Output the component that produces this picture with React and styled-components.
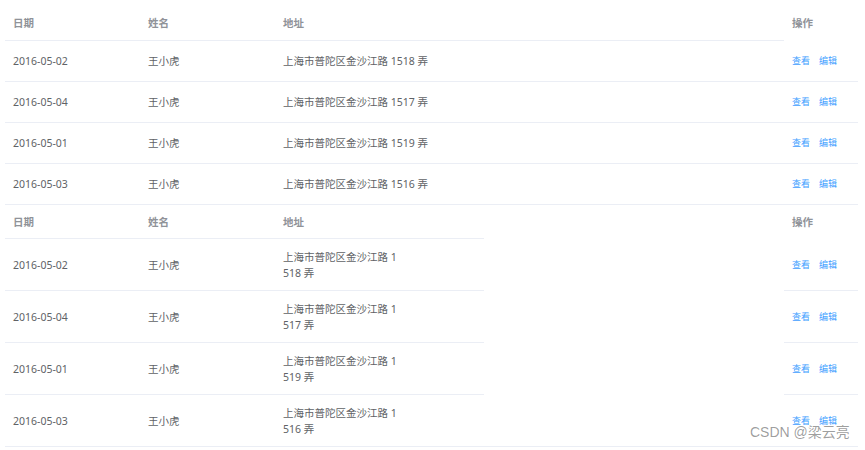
import React from "react";
import styled, { createGlobalStyle } from "styled-components";

const GlobalStyle = createGlobalStyle`
  html, body {
    margin: 0;
    padding: 0;
    background: #fff;
  }
  body {
    font-family: "Noto Sans", "Noto Sans CJK SC", sans-serif;
  }
`;

const Page = styled.div`
  position: relative;
  width: 865px;
  height: 450px;
  padding: 5px 7px 0 5px;
  box-sizing: border-box;
  overflow: hidden;
`;

const TableWrap = styled.div`
  display: flex;
  border-bottom: 1px solid #ebeef5;
  font-size: 10.5px;
  color: #606266;
`;

const Main = styled.div`
  flex: 1;
  min-width: 0;
`;

// content-box height; the border sits below it, the last row has none
const Row = styled.div`
  display: grid;
  grid-template-columns: ${(p) => p.$cols};
  width: ${(p) => p.$width};
  height: ${(p) => p.$height}px;
  border-bottom: 1px solid #ebeef5;

  &:last-child {
    border-bottom: none;
  }
`;

const Cell = styled.div`
  display: flex;
  align-items: center;
  padding: 0 ${(p) => (p.$narrow ? 11 : 8)}px 0 8px;
  line-height: 16px;
  word-break: break-all;
  color: ${(p) => (p.$head ? "#909399" : "#606266")};
  font-weight: ${(p) => (p.$head ? "bold" : "normal")};
`;

const Fixed = styled.div`
  width: 74px;
  flex: none;
  background: #fff;
`;

const FixedRow = styled.div`
  display: flex;
  align-items: center;
  gap: 9px;
  padding-left: 8px;
  height: ${(p) => p.$height}px;
  border-bottom: 1px solid ${(p) => (p.$head ? "transparent" : "#ebeef5")};
  color: #909399;
  font-weight: bold;

  &:last-child {
    border-bottom: none;
  }
`;

const LinkButton = styled.button`
  background: none;
  border: none;
  padding: 0;
  font-family: inherit;
  font-size: 9px;
  line-height: 12px;
  color: #409eff;
  cursor: pointer;
`;

const Watermark = styled.div`
  position: absolute;
  left: 750px;
  top: 424px;
  font-family: "Liberation Sans", "Noto Sans CJK SC", sans-serif;
  font-size: 14px;
  line-height: 16px;
  color: rgba(0, 0, 0, 0.4);
  white-space: nowrap;
  pointer-events: none;
`;

const data = [
  { date: "2016-05-02", name: "王小虎", address: "上海市普陀区金沙江路 1518 弄" },
  { date: "2016-05-04", name: "王小虎", address: "上海市普陀区金沙江路 1517 弄" },
  { date: "2016-05-01", name: "王小虎", address: "上海市普陀区金沙江路 1519 弄" },
  { date: "2016-05-03", name: "王小虎", address: "上海市普陀区金沙江路 1516 弄" },
];

const DataTable = ({ cols, width, headHeight, rowHeight, narrow }) => {
  return (
    <TableWrap>
      <Main>
        <Row $cols={cols} $width={width} $height={headHeight}>
          <Cell $head>日期</Cell>
          <Cell $head>姓名</Cell>
          <Cell $head>地址</Cell>
        </Row>
        {data.map((row, i) => (
          <Row key={i} $cols={cols} $width={width} $height={rowHeight}>
            <Cell>{row.date}</Cell>
            <Cell>{row.name}</Cell>
            <Cell $narrow={narrow}>{row.address}</Cell>
          </Row>
        ))}
      </Main>
      <Fixed>
        <FixedRow $head $height={headHeight}>
          操作
        </FixedRow>
        {data.map((row, i) => (
          <FixedRow key={i} $height={rowHeight}>
            <LinkButton>查看</LinkButton>
            <LinkButton>编辑</LinkButton>
          </FixedRow>
        ))}
      </Fixed>
    </TableWrap>
  );
};

const App = () => {
  return (
    <Page>
      <GlobalStyle />
      <DataTable cols="135px 135px 1fr" width="100%" headHeight={35} rowHeight={40} />
      <DataTable
        cols="135px 135px 135px 74px"
        width="479px"
        headHeight={33}
        rowHeight={51}
        narrow
      />
      <Watermark>CSDN @梁云亮</Watermark>
    </Page>
  );
};

export default App;
